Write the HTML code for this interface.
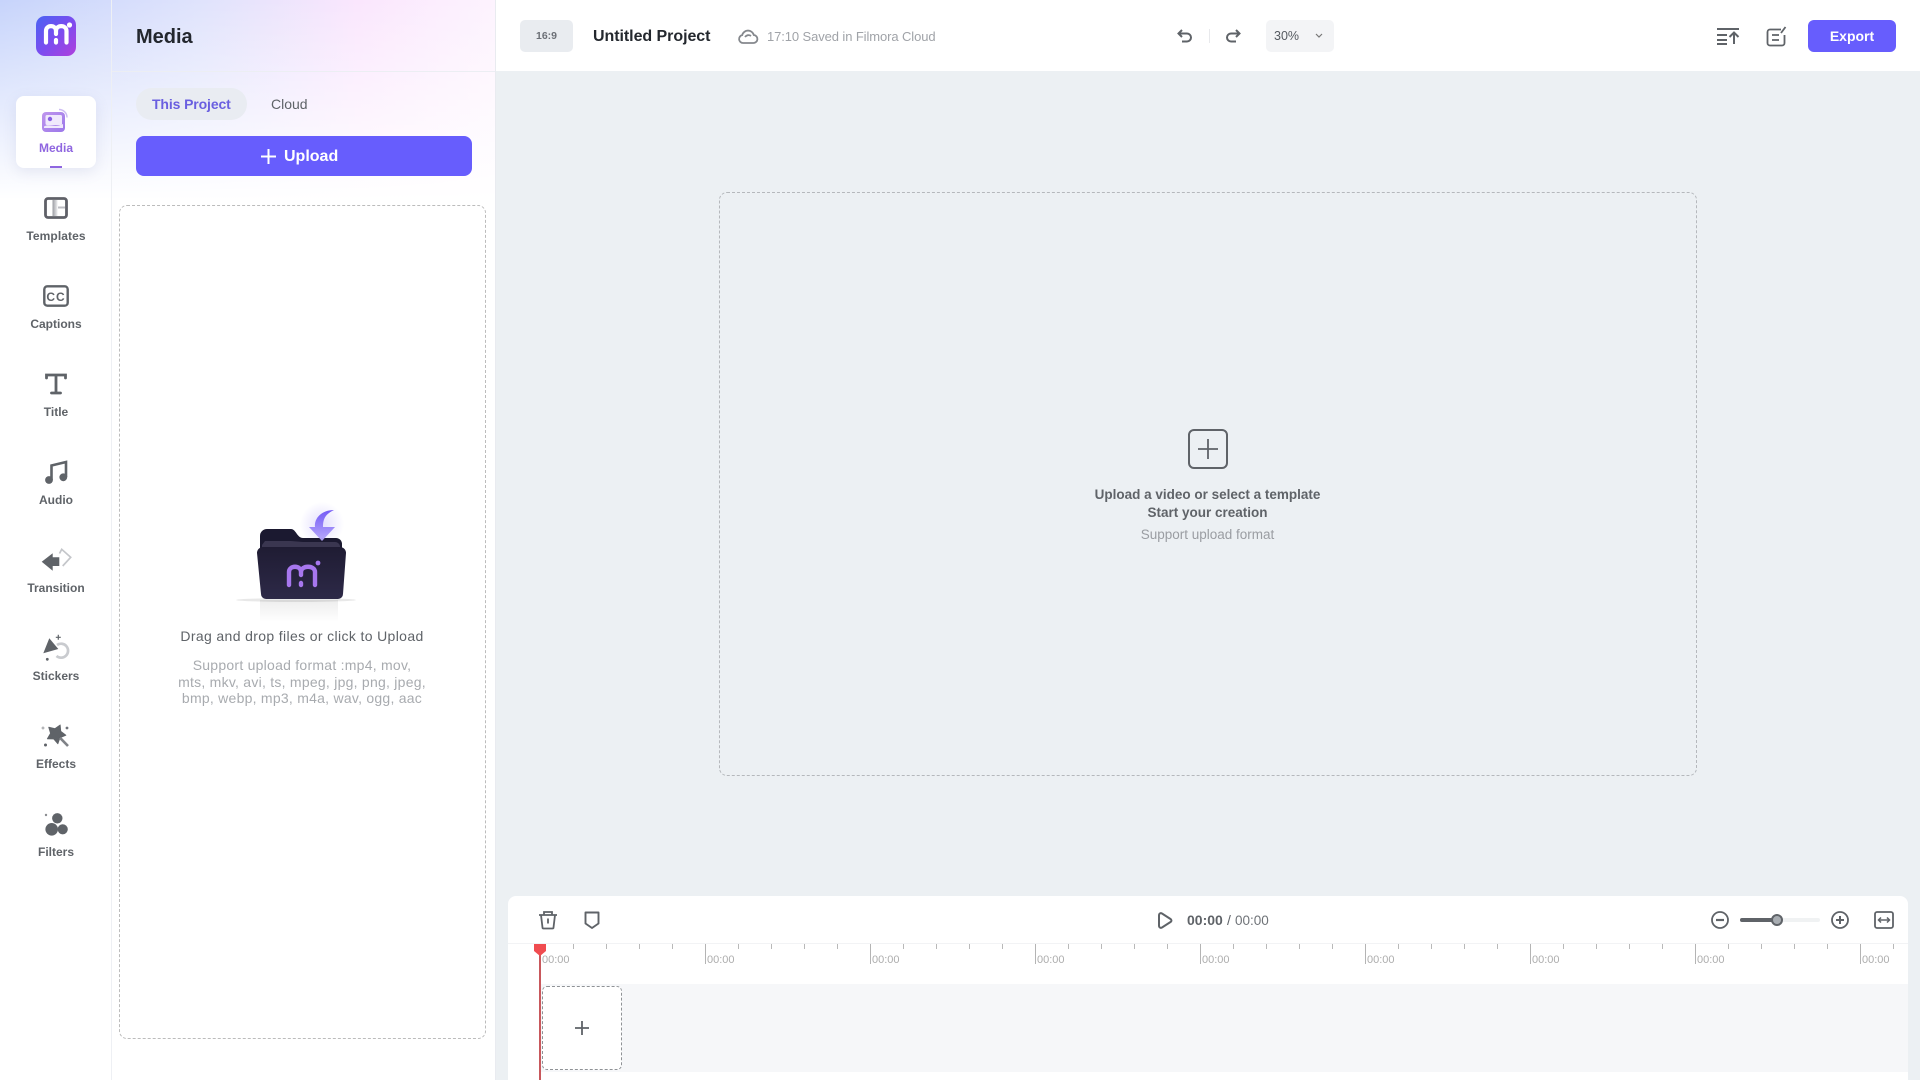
<!DOCTYPE html>
<html><head><meta charset="utf-8"><title>Filmora</title>
<style>
*{box-sizing:border-box;margin:0;padding:0}
html,body{width:1920px;height:1080px;overflow:hidden;background:#fff;font-family:"Liberation Sans",sans-serif}
.a{position:absolute}
.t{position:absolute;white-space:nowrap;line-height:18px}
.c{transform:translateX(-50%);text-align:center}
.nav{position:absolute;left:0;width:112px;text-align:center;font-size:12px;font-weight:bold;color:#5f6368;line-height:16px}
svg{position:absolute;overflow:visible}
.tl{position:absolute;top:954px;font-size:11px;color:#adadad;line-height:12px}
.mj{position:absolute;top:944px;width:1px;height:20px;background:#b4b4b4}
</style></head><body>
<div class="a" style="left:0;top:0;width:496px;height:200px;background:linear-gradient(180deg,rgba(255,255,255,0) 0,#fff 100%),linear-gradient(90deg,#c7d4fb 0,#dfe3fc 40%,#fae6fd 72%,#fdf3fe 100%)"></div>
<div class="a" style="left:111px;top:0;width:1px;height:1080px;background:#eef0f4"></div>
<div class="a" style="left:112px;top:71px;width:384px;height:1px;background:#eceef3"></div>
<div class="a" style="left:495px;top:0;width:1px;height:1080px;background:#e9ebf0"></div>

<!-- logo -->
<div class="a" style="left:36px;top:16px;width:40px;height:40px;border-radius:9px;background:linear-gradient(135deg,#4a63f2 0,#7a4df0 50%,#b040dc 100%)"></div>
<svg style="left:36px;top:16px" width="40" height="40" fill="none" stroke="#fff" stroke-linecap="round"><path d="M10 26.500V15c0-6.500 10-6.500 10 0v3M20 24v2.500M20 15c0-6.500 10.500-6.500 10.500 0v11.500" stroke-width="4.200"/><circle cx="33.500" cy="9" r="2.600" fill="#fff" stroke="none"/></svg>

<!-- nav -->
<div class="a" style="left:16px;top:96px;width:80px;height:72px;background:#fff;border-radius:8px;box-shadow:0 4px 14px rgba(110,120,170,.14)"></div>
<svg style="left:42px;top:108px" width="28" height="26" fill="none"><defs><linearGradient id="g" x1="0" y1="0" x2="1" y2="1"><stop offset="0" stop-color="#b483ea"/><stop offset="1" stop-color="#8a60e6"/></linearGradient></defs><rect x="0" y="4" width="23" height="20" rx="4" fill="url(#g)" opacity=".85"/><rect x="3.500" y="7" width="16.500" height="10" rx="1.500" fill="#f0e9fc"/><circle cx="8" cy="11" r="2.200" fill="#8a60e6"/><path d="M2 18.500c6-3.500 10 2 19-2.500v4H2z" fill="#f0e9fc"/><path d="M17 1.500c4 0 8 3 8 8" stroke="#cdbcf3" stroke-width="1.500"/></svg>
<div class="nav" style="top:140px;color:#8f66e0">Media</div>
<div class="a" style="left:50px;top:166px;width:12px;height:2px;background:#8f66e0"></div>

<svg style="left:44px;top:197px" width="24" height="22" fill="none"><defs><linearGradient id="tg" x1="0" y1="0" x2="1" y2="0"><stop offset="0" stop-color="#9a9ca2"/><stop offset="1" stop-color="#eeeef0"/></linearGradient></defs><rect x="1.500" y="1.500" width="21" height="19" rx="2.500" stroke="#5f6068" stroke-width="2.800"/><rect x="8.500" y="3" width="5" height="16" fill="url(#tg)"/><path d="M14 10.500h7" stroke="#bcbdc3" stroke-width="2"/></svg>
<div class="nav" style="top:228px;letter-spacing:.1px">Templates</div>

<svg style="left:43px;top:285px" width="26" height="22" fill="none"><rect x="1.300" y="1.300" width="23.400" height="19.400" rx="3" stroke="#5f6368" stroke-width="2.400"/><text x="13" y="16" font-family="Liberation Sans" font-size="12" font-weight="bold" fill="#5f6368" text-anchor="middle" letter-spacing="1">CC</text></svg>
<div class="nav" style="top:316px">Captions</div>

<svg style="left:44px;top:372px" width="24" height="24" fill="none" stroke="#5f6368" stroke-width="2.800" stroke-linecap="round"><path d="M2.500 6V3h19v3M12 3v18M7.500 21h9"/></svg>
<div class="nav" style="top:404px">Title</div>

<svg style="left:44px;top:460px" width="24" height="24" fill="none"><path d="M7.500 20V5.500L22 2v15" stroke="#5f6368" stroke-width="2.600"/><circle cx="5" cy="20" r="3.900" fill="#5f6368"/><circle cx="19.300" cy="17.300" r="3.900" fill="#5f6368"/></svg>
<div class="nav" style="top:492px">Audio</div>

<svg style="left:40px;top:546px" width="32" height="26" fill="none"><path d="M1.700 15.700L12.700 7.300V11.300H19.300V20H12.700V24.700z" fill="#5f6368"/><path d="M19.500 7.500L21.700 3.300 30.700 11.300 22.700 20" stroke="#c4c6ca" stroke-width="1.700"/></svg>
<div class="nav" style="top:580px">Transition</div>

<svg style="left:41px;top:634px" width="30" height="30" fill="none"><path d="M8.300 4.300L2.300 19.300 17.300 15z" fill="#5f6368"/><path d="M16 11a7 7 0 11-.5 11" stroke="#c9cbcf" stroke-width="2.700"/><path d="M17.300 0.800v5M14.800 3.300h5" stroke="#5f6368" stroke-width="1.200"/><circle cx="6.300" cy="25.300" r="1.400" fill="#5f6368"/></svg>
<div class="nav" style="top:668px">Stickers</div>

<svg style="left:41px;top:722px" width="30" height="28" fill="none"><path d="M19.200 2.900L19.800 9.300 24.900 13.200 19 15.800 16.900 21.800 12.700 17 6.300 16.800 9.500 11.300 7.700 5.200 14 6.600z" fill="#5f6368" stroke="#5f6368" stroke-width=".8" stroke-linejoin="round"/><path d="M19 15.800L27 24" stroke="#7f8287" stroke-width="2.600"/><path d="M.5 6h3M2 4.500v3" stroke="#9a9ca0" stroke-width="1"/><circle cx="26" cy="6" r="1.400" fill="#70737a"/><circle cx="4.500" cy="23" r="1.500" fill="#5f6368"/></svg>
<div class="nav" style="top:756px">Effects</div>

<svg style="left:43px;top:811px" width="26" height="26"><circle cx="14.300" cy="7.300" r="5.200" fill="#5f6368"/><circle cx="8.700" cy="18.300" r="6.300" fill="#5f6368"/><circle cx="19.700" cy="18.300" r="5.100" fill="#5f6368"/><circle cx="3" cy="4" r="1.200" fill="#8a8c90"/></svg>
<div class="nav" style="top:844px">Filters</div>

<!-- panel -->
<div class="t" style="left:136px;top:26px;font-size:20px;font-weight:bold;color:#23272e;line-height:22px">Media</div>
<div class="a" style="left:136px;top:88px;width:111px;height:32px;border-radius:16px;background:#e9ecf2"></div>
<div class="t" style="left:152px;top:95px;font-size:14px;font-weight:bold;color:#6a5fe0;letter-spacing:-.12px">This Project</div>
<div class="t" style="left:271px;top:95px;font-size:14px;color:#5f6368">Cloud</div>
<div class="a" style="left:136px;top:136px;width:336px;height:40px;border-radius:8px;background:#675dfd"></div>
<svg style="left:261px;top:149px" width="15" height="15" stroke="#fff" stroke-width="2"><path d="M7.500 0v15M0 7.500h15"/></svg>
<div class="t" style="left:284px;top:148px;font-size:16px;font-weight:bold;color:#fff">Upload</div>
<div class="a" style="left:119px;top:205px;width:367px;height:834px;border:1px dashed #bcbcbc;border-radius:8px"></div>

<!-- folder -->
<svg style="left:220px;top:500px" width="170" height="136" fill="none">
<defs><linearGradient id="s" x1="0" y1="0" x2="0" y2="1"><stop offset="0" stop-color="#000" stop-opacity=".07"/><stop offset="1" stop-color="#000" stop-opacity="0"/></linearGradient>
<linearGradient id="f" x1="0" y1="0" x2="0" y2="1"><stop offset="0" stop-color="#1f1c33"/><stop offset="1" stop-color="#2d2947"/></linearGradient>
<linearGradient id="ar" x1="0" y1="0" x2="0" y2="1"><stop offset="0" stop-color="#6d52f5"/><stop offset="1" stop-color="#b7a8fb"/></linearGradient>
<radialGradient id="gl"><stop offset="0" stop-color="#9a88fb" stop-opacity=".28"/><stop offset="1" stop-color="#9a88fb" stop-opacity="0"/></radialGradient></defs>
<rect x="40" y="100" width="78" height="22" fill="url(#s)"/>
<ellipse cx="76" cy="100" rx="60" ry="2" fill="#000" opacity=".09"/>
<ellipse cx="102" cy="24" rx="22" ry="22" fill="url(#gl)"/>
<path d="M40 36a7 7 0 017-7h24c5 0 6 9 12 9h33a6 6 0 016 6v12H40z" fill="#1b1930"/>
<path d="M114 10C102 10 94 18 95 27H89L102 41 115 27H103C103 18 106 14 114 10z" fill="url(#ar)" opacity=".95"/>
<path d="M45 41h26l12 1h32a5 5 0 015 4v3H42v-4z" fill="#3a3650"/>
<path d="M43 47H120a6 6 0 016 6l-3 41a5 5 0 01-5 5H46a5 5 0 01-5-5l-4-41a6 6 0 016-6z" fill="url(#f)"/>
<path d="M69 85V72c0-7 12-7 12 0v3M81 83v2M81 72c0-7 14-7 14 0v13" stroke="#a777ee" stroke-width="4.400" stroke-linecap="round"/>
<circle cx="98" cy="63" r="2.400" fill="#a777ee"/>
</svg>
<div class="t c" style="left:302px;top:627px;font-size:14px;color:#5f6368;letter-spacing:.36px">Drag and drop files or click to Upload</div>
<div class="t c" style="left:302px;top:657px;font-size:14px;color:#a8abaf;line-height:16.500px;letter-spacing:.25px">Support upload format :mp4, mov,<br>mts, mkv, avi, ts, mpeg, jpg, png, jpeg,<br>bmp, webp, mp3, m4a, wav, ogg, aac</div>

<!-- main -->
<div class="a" style="left:496px;top:71px;width:1424px;height:1009px;background:#ecf0f3"></div>

<!-- top bar -->
<div class="a" style="left:520px;top:20px;width:53px;height:32px;border-radius:5px;background:#e9ecf0"></div>
<div class="t c" style="left:546.500px;top:27px;font-size:10.500px;font-weight:bold;color:#6b6f76">16:9</div>
<div class="t" style="left:593px;top:28px;font-size:16px;font-weight:bold;color:#24282e;letter-spacing:-.05px">Untitled Project</div>
<svg style="left:738px;top:28px" width="20" height="17" fill="none" stroke="#85888d" stroke-width="1.800"><path d="M5 15a4 4 0 01-.8-7.900A6 6 0 0115.800 7 4 4 0 0115 15zM7 9c1.500-2 4-2.500 6-1"/></svg>
<div class="t" style="left:767px;top:28px;font-size:13px;color:#a0a3a8;letter-spacing:-.1px">17:10 Saved in Filmora Cloud</div>

<svg style="left:1177px;top:28px" width="17" height="17" fill="none" stroke="#5f6368" stroke-width="2"><path d="M5 2L1.500 5.500 5 9M2 5.500h8a4 4 0 010 8H5"/></svg>
<div class="a" style="left:1209px;top:29px;width:1px;height:14px;background:#e8e9ec"></div>
<svg style="left:1224px;top:28px" width="17" height="17" fill="none" stroke="#5f6368" stroke-width="2"><path d="M12 2l3.500 3.500L12 9M15 5.500H7a4 4 0 000 8h5"/></svg>
<div class="a" style="left:1266px;top:20px;width:68px;height:32px;border-radius:5px;background:#f3f4f6"></div>
<div class="t" style="left:1274px;top:27px;font-size:12.500px;color:#555a60">30%</div>
<svg style="left:1315px;top:33px" width="8" height="6" fill="none" stroke="#777" stroke-width="1.200"><path d="M1 1l3 3 3-3"/></svg>
<svg style="left:1716px;top:27px" width="24" height="18" fill="none" stroke="#5f6368" stroke-width="2"><path d="M1 2h22M1 8h10M1 13h10M1 17h10M18 17V6M13.500 10L18 5.500l4.500 4.500"/></svg>
<svg style="left:1766px;top:26px" width="22" height="20" fill="none" stroke="#5f6368" stroke-width="1.800"><path d="M15 3.500H4a2.500 2.500 0 00-2.500 2.500v11a2.500 2.500 0 002.500 2.500h12a2.500 2.500 0 002.500-2.500V9M6 9h7M6 14h7M15 7l4.500-6"/></svg>
<div class="a" style="left:1808px;top:20px;width:88px;height:32px;border-radius:6px;background:#675dfd"></div>
<div class="t c" style="left:1852px;top:27px;font-size:14px;font-weight:bold;color:#fff">Export</div>

<!-- canvas -->
<div class="a" style="left:719px;top:192px;width:978px;height:584px;border:1px dashed #b5b8bc;border-radius:8px"></div>
<svg style="left:1188px;top:429px" width="40" height="40" fill="none" stroke="#5f6368"><rect x="1" y="1" width="38" height="38" rx="5" stroke-width="2"/><path d="M20 10v20M10 20h20" stroke-width="1.800"/></svg>
<div class="t c" style="left:1207.500px;top:486px;font-size:13.500px;font-weight:bold;color:#5f6368">Upload a video or select a template</div>
<div class="t c" style="left:1207.500px;top:504px;font-size:13.500px;font-weight:bold;color:#5f6368">Start your creation</div>
<div class="t c" style="left:1207.500px;top:526px;font-size:13.500px;color:#9a9da2">Support upload format</div>

<!-- timeline -->
<div class="a" style="left:508px;top:896px;width:1400px;height:184px;background:#fff;border-radius:8px 8px 0 0"></div>
<div class="a" style="left:508px;top:943px;width:1400px;height:1px;background:#f2f3f5"></div>
<svg style="left:538px;top:910px" width="20" height="20" fill="none" stroke="#5f6368" stroke-width="1.800"><path d="M1 5h18M6 5V2h8v3M3 5l1.500 12.500a1 1 0 001 1h9a1 1 0 001-1L17 5M10 8.500v5"/></svg>
<svg style="left:584px;top:911px" width="16" height="18" fill="none" stroke="#5f6368" stroke-width="1.900"><path d="M1.500 1.500h13v11L8 17l-6.500-4.500z" stroke-linejoin="round"/></svg>
<svg style="left:1157px;top:912px" width="16" height="17" fill="none" stroke="#5f6368" stroke-width="2"><path d="M2 3.500c0-2 1.500-2.800 3-2l8.500 5.500c1.300 .9 1.300 2.100 0 3L5 15.500c-1.500 .8-3 0-3-2z"/></svg>
<div class="t" style="left:1187px;top:911px;font-size:14px;font-weight:bold;color:#5f6368">00:00</div>
<div class="t" style="left:1227px;top:911px;font-size:14px;color:#5f6368">/</div>
<div class="t" style="left:1235px;top:912px;font-size:13.500px;color:#6f7378">00:00</div>
<svg style="left:1711px;top:911px" width="18" height="18" fill="none" stroke="#5f6368" stroke-width="1.800"><circle cx="9" cy="9" r="8"/><path d="M5 9h8" stroke-width="2.200"/></svg>
<div class="a" style="left:1740px;top:918px;width:80px;height:4px;border-radius:2px;background:#f0f2f3"></div>
<div class="a" style="left:1740px;top:918px;width:37px;height:4px;border-radius:2px;background:#5f6368"></div>
<div class="a" style="left:1771px;top:914px;width:12px;height:12px;border-radius:50%;background:#a8adb2;border:2px solid #5f6368"></div>
<svg style="left:1831px;top:911px" width="18" height="18" fill="none" stroke="#5f6368" stroke-width="1.800"><circle cx="9" cy="9" r="8"/><path d="M5 9h8M9 5v8" stroke-width="2"/></svg>
<svg style="left:1874px;top:911px" width="20" height="18" fill="none" stroke="#5f6368"><rect x="1" y="1" width="18" height="16" rx="2" stroke-width="1.800"/><path d="M5 9h10" stroke-width="1.500"/><path d="M7 6.500L4.500 9 7 11.500M13 6.500L15.500 9 13 11.500" stroke-width="1.500"/></svg>

<!-- ruler -->
<div class="a" style="left:540px;top:944px;width:1368px;height:5px;background:repeating-linear-gradient(90deg,#b9b9b9 0,#b9b9b9 1px,transparent 1px,transparent 33px)"></div>
<div class="mj" style="left:705px"></div><div class="mj" style="left:870px"></div><div class="mj" style="left:1035px"></div><div class="mj" style="left:1200px"></div><div class="mj" style="left:1365px"></div><div class="mj" style="left:1530px"></div><div class="mj" style="left:1695px"></div><div class="mj" style="left:1860px"></div>
<div class="tl" style="left:542px">00:00</div><div class="tl" style="left:707px">00:00</div><div class="tl" style="left:872px">00:00</div><div class="tl" style="left:1037px">00:00</div><div class="tl" style="left:1202px">00:00</div><div class="tl" style="left:1367px">00:00</div><div class="tl" style="left:1532px">00:00</div><div class="tl" style="left:1697px">00:00</div><div class="tl" style="left:1862px">00:00</div>

<div class="a" style="left:541px;top:984px;width:1367px;height:88px;background:#f6f7f9"></div>
<div class="a" style="left:542px;top:986px;width:80px;height:84px;background:#fff;border:1px dashed #8f9296;border-radius:5px"></div>
<svg style="left:575px;top:1021px" width="14" height="14" stroke="#5f6368" stroke-width="1.800"><path d="M7 0v14M0 7h14"/></svg>
<div class="a" style="left:539px;top:950px;width:2px;height:130px;background:#c8585c"></div>
<svg style="left:534px;top:944px" width="12" height="12"><path d="M0 0h12v7l-6 5-6-5z" fill="#f04c50"/></svg>
</body></html>
